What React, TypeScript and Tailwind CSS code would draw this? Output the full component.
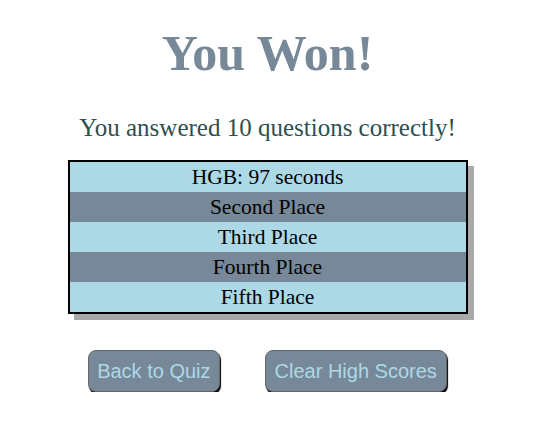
const scores = ["HGB: 97 seconds", "Second Place", "Third Place", "Fourth Place", "Fifth Place"];

export default function App() {
  return (
    <div className="w-[535px] bg-white text-center font-['Liberation_Serif','Times_New_Roman',serif]">
      <h1 className="pt-[26px] text-[50px] leading-[55px] font-bold text-[#778899]">You Won!</h1>
      <p className="mt-[33px] text-[25px] leading-[28px] text-[#2f4f4f]">
        You answered 10 questions correctly!
      </p>
      <div className="mx-auto mt-[18px] w-[400px] border-2 border-black shadow-[6px_6px_0_#a9a9a9]">
        {scores.map((s, i) => (
          <div
            key={s}
            className={`h-[30px] text-[21.5px] leading-[30px] text-black ${i % 2 === 0 ? "bg-[#add8e6]" : "bg-[#778899]"}`}
          >
            {s}
          </div>
        ))}
      </div>
      <div className="mt-[36px] flex justify-center gap-[45px] font-['Liberation_Sans',Arial,sans-serif]">
        <button className="rounded-lg border border-[#666] bg-[#778899] px-2 py-2 text-[20px] leading-[24px] text-[#add8e6] shadow-[1px_2px_1px_#000]">
          Back to Quiz
        </button>
        <button className="rounded-lg border border-[#666] bg-[#778899] px-[9px] py-2 text-[20px] leading-[24px] text-[#add8e6] shadow-[1px_2px_1px_#000]">
          Clear High Scores
        </button>
      </div>
    </div>
  );
}
